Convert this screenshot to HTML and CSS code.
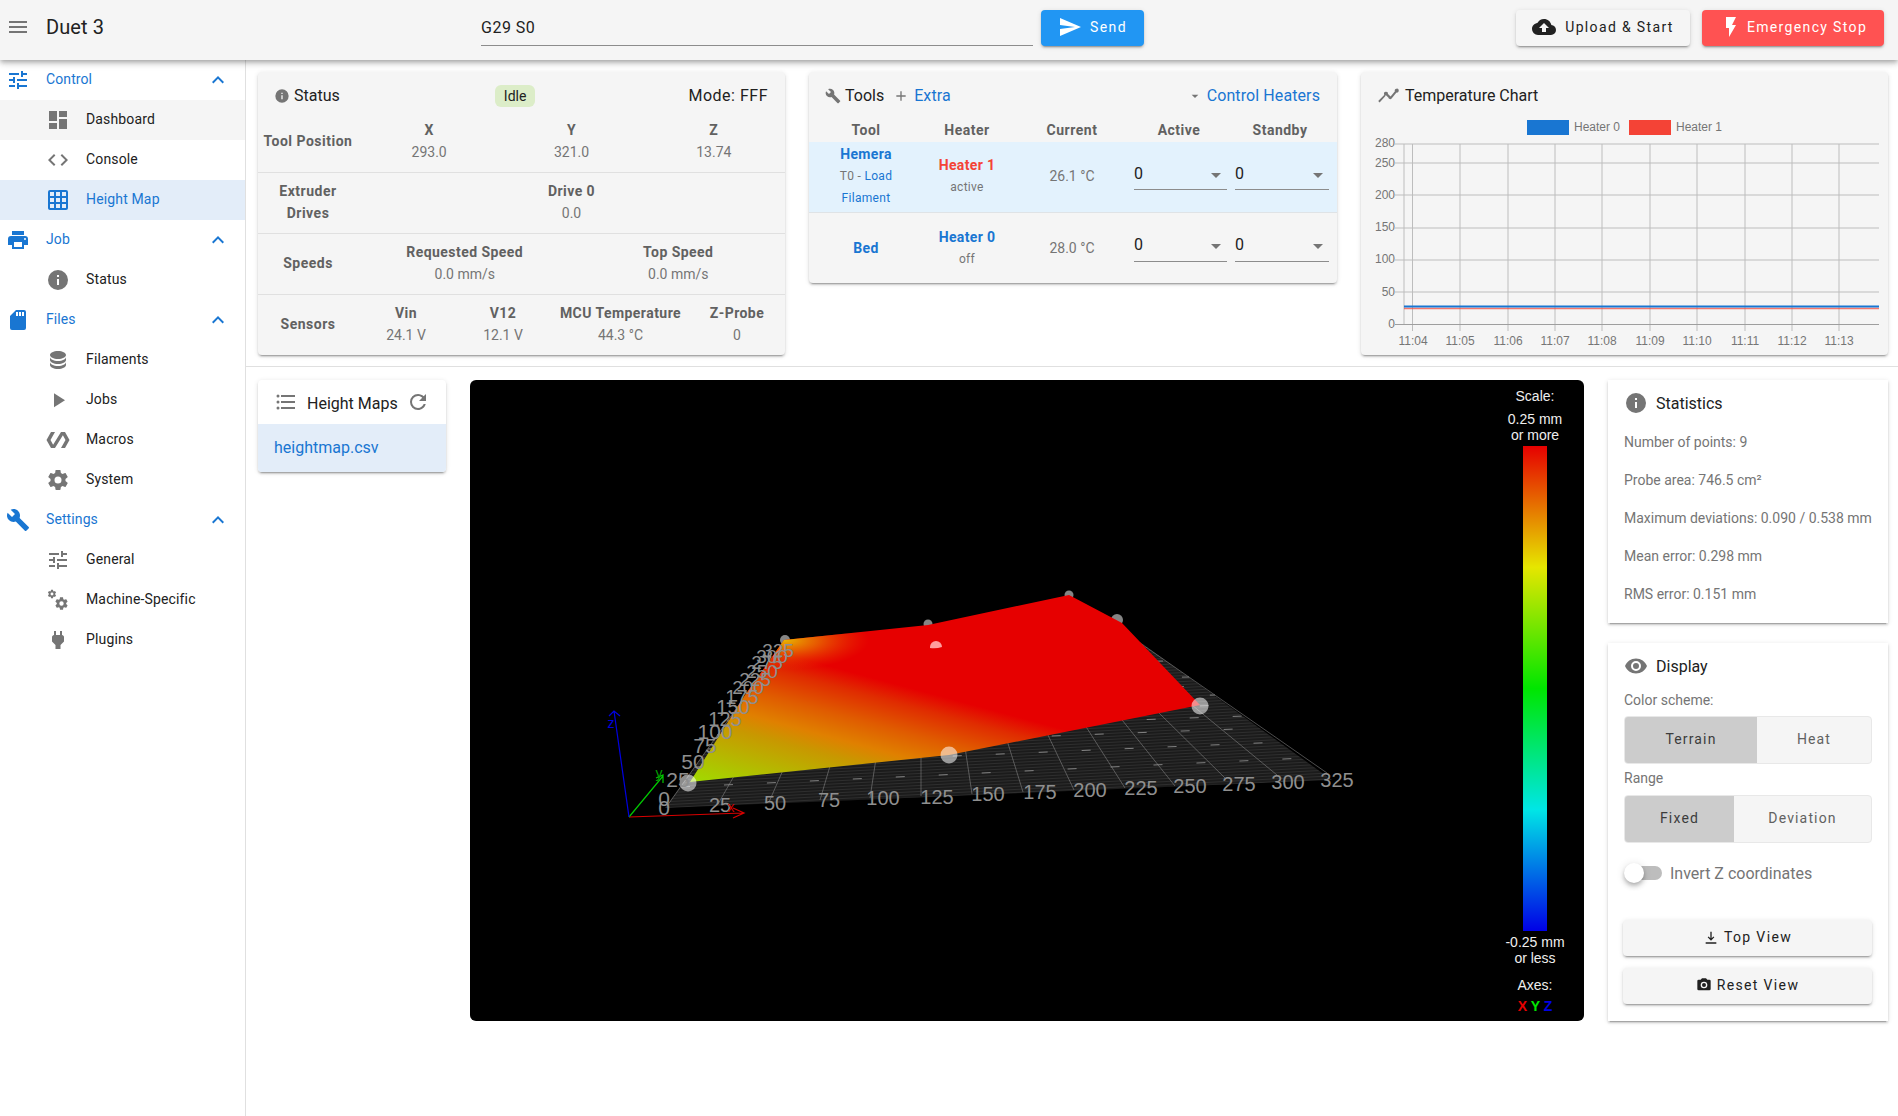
FILE: index.html
```html
<!DOCTYPE html>
<html lang="en">
<head>
<meta charset="utf-8">
<title>Duet 3</title>
<link rel="stylesheet" href="styles.css">
</head>
<body>
<svg class="defs" aria-hidden="true">
<defs>
<symbol id="i-menu" viewBox="0 0 24 24"><path d="M3,6H21V8H3V6M3,11H21V13H3V11M3,16H21V18H3V16Z"/></symbol>
<symbol id="i-tune" viewBox="0 0 24 24"><path d="M3 17v2h6v-2H3zM3 5v2h10V5H3zm10 16v-2h8v-2h-8v-2h-2v6h2zM7 9v2H3v2h4v2h2V9H7zm14 4v-2H11v2h10zm-6-4h2V7h4V5h-4V3h-2v6z"/></symbol>
<symbol id="i-up" viewBox="0 0 24 24"><path d="M7.41,15.41L12,10.83L16.59,15.41L18,14L12,8L6,14L7.41,15.41Z"/></symbol>
<symbol id="i-dash" viewBox="0 0 24 24"><path d="M13,3V9H21V3M13,21H21V11H13M3,21H11V15H3M3,13H11V3H3V13Z"/></symbol>
<symbol id="i-code" viewBox="0 0 24 24"><path d="M14.6,16.6L19.2,12L14.6,7.4L16,6L22,12L16,18L14.6,16.6M9.4,16.6L4.8,12L9.4,7.4L8,6L2,12L8,18L9.4,16.6Z"/></symbol>
<symbol id="i-grid" viewBox="0 0 24 24"><path d="M10,4V8H14V4H10M16,4V8H20V4H16M16,10V14H20V10H16M16,16V20H20V16H16M14,20V16H10V20H14M8,20V16H4V20H8M8,14V10H4V14H8M8,8V4H4V8H8M10,14H14V10H10V14M4,2H20A2,2 0 0,1 22,4V20A2,2 0 0,1 20,22H4C2.92,22 2,21.1 2,20V4A2,2 0 0,1 4,2Z"/></symbol>
<symbol id="i-print" viewBox="0 0 24 24"><path d="M18,3H6V7H18M19,12A1,1 0 0,1 18,11A1,1 0 0,1 19,10A1,1 0 0,1 20,11A1,1 0 0,1 19,12M16,19H8V14H16M19,8H5A3,3 0 0,0 2,11V17H6V21H18V17H22V11A3,3 0 0,0 19,8Z"/></symbol>
<symbol id="i-info" viewBox="0 0 24 24"><path d="M13,9H11V7H13M13,17H11V11H13M12,2A10,10 0 0,0 2,12A10,10 0 0,0 12,22A10,10 0 0,0 22,12A10,10 0 0,0 12,2Z"/></symbol>
<symbol id="i-sd" viewBox="0 0 24 24"><path d="M18,8H16V4H18M15,8H13V4H15M12,8H10V4H12M18,2H10L4,8V20A2,2 0 0,0 6,22H18A2,2 0 0,0 20,20V4A2,2 0 0,0 18,2Z"/></symbol>
<symbol id="i-db" viewBox="0 0 24 24"><path d="M12,3C7.58,3 4,4.79 4,7C4,9.21 7.58,11 12,11C16.42,11 20,9.21 20,7C20,4.79 16.42,3 12,3M4,9V12C4,14.21 7.58,16 12,16C16.42,16 20,14.21 20,12V9C20,11.21 16.42,13 12,13C7.58,13 4,11.21 4,9M4,14V17C4,19.21 7.58,21 12,21C16.42,21 20,19.21 20,17V14C20,16.21 16.42,18 12,18C7.58,18 4,16.21 4,14Z"/></symbol>
<symbol id="i-play" viewBox="0 0 24 24"><path d="M8,5.14V19.14L19,12.14L8,5.14Z"/></symbol>
<symbol id="i-poly" viewBox="0 0 24 24"><path d="M19 4h-4L7.11 16.63 4.5 12 9 4H5L.5 12 5 20h4l7.89-12.63L19.5 12 15 20h4l4.5-8z"/></symbol>
<symbol id="i-cog" viewBox="0 0 24 24"><path d="M12,15.5A3.5,3.5 0 0,1 8.5,12A3.5,3.5 0 0,1 12,8.5A3.5,3.5 0 0,1 15.5,12A3.5,3.5 0 0,1 12,15.5M19.43,12.97C19.47,12.65 19.5,12.33 19.5,12C19.5,11.67 19.47,11.34 19.43,11L21.54,9.37C21.73,9.22 21.78,8.95 21.66,8.73L19.66,5.27C19.54,5.05 19.27,4.96 19.05,5.05L16.56,6.05C16.04,5.66 15.5,5.32 14.87,5.07L14.5,2.42C14.46,2.18 14.25,2 14,2H10C9.75,2 9.54,2.18 9.5,2.42L9.13,5.07C8.5,5.32 7.96,5.66 7.44,6.05L4.95,5.05C4.73,4.96 4.46,5.05 4.34,5.27L2.34,8.73C2.21,8.95 2.27,9.22 2.46,9.37L4.57,11C4.53,11.34 4.5,11.67 4.5,12C4.5,12.33 4.53,12.65 4.57,12.97L2.46,14.63C2.27,14.78 2.21,15.05 2.34,15.27L4.34,18.73C4.46,18.95 4.73,19.03 4.95,18.95L7.44,17.94C7.96,18.34 8.5,18.68 9.13,18.93L9.5,21.58C9.54,21.82 9.75,22 10,22H14C14.25,22 14.46,21.82 14.5,21.58L14.87,18.93C15.5,18.67 16.04,18.34 16.56,17.94L19.05,18.95C19.27,19.03 19.54,18.95 19.66,18.73L21.66,15.27C21.78,15.05 21.73,14.78 21.54,14.63L19.43,12.97Z"/></symbol>
<symbol id="i-cogs" viewBox="0 0 24 24"><use href="#i-cog" x="8" y="8" width="15" height="15"/><use href="#i-cog" x="1" y="1" width="10" height="10"/></symbol>
<symbol id="i-wrench" viewBox="0 0 24 24"><path d="M22.7,19L13.6,9.9C14.5,7.6 14,4.9 12.1,3C10.1,1 7.1,0.6 4.7,1.7L9,6L6,9L1.6,4.7C0.4,7.1 0.9,10.1 2.9,12.1C4.8,14 7.5,14.5 9.8,13.6L18.9,22.7C19.3,23.1 19.9,23.1 20.3,22.7L22.6,20.4C23.1,20 23.1,19.3 22.7,19Z"/></symbol>
<symbol id="i-plug" viewBox="0 0 24 24"><path d="M16,7V3H14V7H10V3H8V7C7,7 6,8 6,9V13.5L9.5,17V21H14.5V17L18,13.5V9C18,8 17,7 16,7Z"/></symbol>
<symbol id="i-send" viewBox="0 0 24 24"><path d="M2,21L23,12L2,3V10L17,12L2,14V21Z"/></symbol>
<symbol id="i-upload" viewBox="0 0 24 24"><path d="M14,13V17H10V13H7L12,8L17,13M19.35,10.03C18.67,6.59 15.64,4 12,4C9.11,4 6.6,5.64 5.35,8.03C2.34,8.36 0,10.9 0,14A6,6 0 0,0 6,20H19A5,5 0 0,0 24,15C24,12.36 21.95,10.22 19.35,10.03Z"/></symbol>
<symbol id="i-flash" viewBox="0 0 24 24"><path d="M7,2V13H10V22L17,10H13L17,2H7Z"/></symbol>
<symbol id="i-plus" viewBox="0 0 24 24"><path d="M19,13H13V19H11V13H5V11H11V5H13V11H19V13Z"/></symbol>
<symbol id="i-down" viewBox="0 0 24 24"><path d="M7,10L12,15L17,10H7Z"/></symbol>
<symbol id="i-trend" viewBox="0 0 24 24"><path d="M2.6,19.4L1.2,18L7.2,12L7.1,11.3A2,2 0 1 1 11,11L13.6,13.6L17.9,8.3A2,2 0 1 1 19.5,9.6L14.6,15.6A2,2 0 0 1 11.3,14.6L8.7,12A2,2 0 0 1 8,13.5Z"/></symbol>
<symbol id="i-list" viewBox="0 0 24 24"><path d="M7,5H21V7H7V5M7,13V11H21V13H7M4,4.5A1.5,1.5 0 0,1 5.5,6A1.5,1.5 0 0,1 4,7.5A1.5,1.5 0 0,1 2.5,6A1.5,1.5 0 0,1 4,4.5M4,10.5A1.5,1.5 0 0,1 5.5,12A1.5,1.5 0 0,1 4,13.5A1.5,1.5 0 0,1 2.5,12A1.5,1.5 0 0,1 4,10.5M7,19V17H21V19H7M4,16.5A1.5,1.5 0 0,1 5.5,18A1.5,1.5 0 0,1 4,19.5A1.5,1.5 0 0,1 2.5,18A1.5,1.5 0 0,1 4,16.5Z"/></symbol>
<symbol id="i-refresh" viewBox="0 0 24 24"><path d="M17.65,6.35C16.2,4.9 14.21,4 12,4A8,8 0 0,0 4,12A8,8 0 0,0 12,20C15.73,20 18.84,17.45 19.73,14H17.65C16.83,16.33 14.61,18 12,18A6,6 0 0,1 6,12A6,6 0 0,1 12,6C13.66,6 15.14,6.69 16.22,7.78L13,11H20V4L17.65,6.35Z"/></symbol>
<symbol id="i-eye" viewBox="0 0 24 24"><path d="M12,9A3,3 0 0,0 9,12A3,3 0 0,0 12,15A3,3 0 0,0 15,12A3,3 0 0,0 12,9M12,17A5,5 0 0,1 7,12A5,5 0 0,1 12,7A5,5 0 0,1 17,12A5,5 0 0,1 12,17M12,4.5C7,4.5 2.73,7.61 1,12C2.73,16.39 7,19.5 12,19.5C17,19.5 21.27,16.39 23,12C21.27,7.61 17,4.5 12,4.5Z"/></symbol>
<symbol id="i-collapse" viewBox="0 0 24 24"><path d="M17,12.5L12,17.5L7,12.5L8.4,11.1L11,13.7V4H13V13.7L15.6,11.1L17,12.5M4,20H20V22H4V20Z"/></symbol>
<symbol id="i-camera" viewBox="0 0 24 24"><path d="M4,4H7L9,2H15L17,4H20A2,2 0 0,1 22,6V18A2,2 0 0,1 20,20H4A2,2 0 0,1 2,18V6A2,2 0 0,1 4,4M12,7A5,5 0 0,0 7,12A5,5 0 0,0 12,17A5,5 0 0,0 17,12A5,5 0 0,0 12,7M12,9A3,3 0 0,1 15,12A3,3 0 0,1 12,15A3,3 0 0,1 9,12A3,3 0 0,1 12,9Z"/></symbol>
</defs>
</svg>

<div class="app">
  <header class="toolbar">
    <svg class="ico ico-24 grey tb-menu"><use href="#i-menu"/></svg>
    <div class="tb-title">Duet 3</div>
    <div class="tb-input">G29 S0</div>
    <button class="btn btn-send"><svg class="ico ico-24"><use href="#i-send"/></svg>Send</button>
    <div class="tb-spacer"></div>
    <button class="btn btn-upload"><svg class="ico ico-24"><use href="#i-upload"/></svg>Upload &amp; Start</button>
    <button class="btn btn-stop"><svg class="ico ico-24"><use href="#i-flash"/></svg>Emergency Stop</button>
  </header>

  <nav class="sidebar">
    <div class="nav-head"><svg class="ico ico-24 nav-head-ico"><use href="#i-tune"/></svg><span class="nav-text">Control</span><svg class="ico ico-24 nav-chev"><use href="#i-up"/></svg></div>
    <div class="nav-item nav-hover"><svg class="ico ico-24 grey"><use href="#i-dash"/></svg><span class="nav-sub">Dashboard</span></div>
    <div class="nav-item"><svg class="ico ico-24 grey"><use href="#i-code"/></svg><span class="nav-sub">Console</span></div>
    <div class="nav-item nav-active"><svg class="ico ico-24"><use href="#i-grid"/></svg><span class="nav-sub">Height Map</span></div>
    <div class="nav-head"><svg class="ico ico-24 nav-head-ico"><use href="#i-print"/></svg><span class="nav-text">Job</span><svg class="ico ico-24 nav-chev"><use href="#i-up"/></svg></div>
    <div class="nav-item"><svg class="ico ico-24 grey"><use href="#i-info"/></svg><span class="nav-sub">Status</span></div>
    <div class="nav-head"><svg class="ico ico-24 nav-head-ico"><use href="#i-sd"/></svg><span class="nav-text">Files</span><svg class="ico ico-24 nav-chev"><use href="#i-up"/></svg></div>
    <div class="nav-item"><svg class="ico ico-24 grey"><use href="#i-db"/></svg><span class="nav-sub">Filaments</span></div>
    <div class="nav-item"><svg class="ico ico-24 grey"><use href="#i-play"/></svg><span class="nav-sub">Jobs</span></div>
    <div class="nav-item"><svg class="ico ico-24 grey"><use href="#i-poly"/></svg><span class="nav-sub">Macros</span></div>
    <div class="nav-item"><svg class="ico ico-24 grey"><use href="#i-cog"/></svg><span class="nav-sub">System</span></div>
    <div class="nav-head"><svg class="ico ico-24 nav-head-ico"><use href="#i-wrench"/></svg><span class="nav-text">Settings</span><svg class="ico ico-24 nav-chev"><use href="#i-up"/></svg></div>
    <div class="nav-item"><svg class="ico ico-24 grey"><use href="#i-tune"/></svg><span class="nav-sub">General</span></div>
    <div class="nav-item"><svg class="ico ico-24 grey"><use href="#i-cogs"/></svg><span class="nav-sub">Machine-Specific</span></div>
    <div class="nav-item"><svg class="ico ico-24 grey"><use href="#i-plug"/></svg><span class="nav-sub">Plugins</span></div>
  </nav>

  <main class="content">
    <section class="top-row">
      <div class="card card-grey card-status">
        <div class="status-head">
          <div class="title"><svg class="ico ico-16 grey"><use href="#i-info"/></svg>Status</div>
          <div class="chip">Idle</div>
          <div class="title title-mode">Mode: FFF</div>
        </div>
        <div class="st-row">
          <div class="st-label">Tool Position</div>
          <div class="st-cols st-3">
            <div class="st-col"><b>X</b><span>293.0</span></div>
            <div class="st-col"><b>Y</b><span>321.0</span></div>
            <div class="st-col"><b>Z</b><span>13.74</span></div>
          </div>
        </div>
        <div class="st-row st-line">
          <div class="st-label">Extruder<br>Drives</div>
          <div class="st-cols st-1"><div class="st-col"><b>Drive 0</b><span>0.0</span></div></div>
        </div>
        <div class="st-row st-line">
          <div class="st-label">Speeds</div>
          <div class="st-cols st-2">
            <div class="st-col"><b>Requested Speed</b><span>0.0 mm/s</span></div>
            <div class="st-col"><b>Top Speed</b><span>0.0 mm/s</span></div>
          </div>
        </div>
        <div class="st-row st-line">
          <div class="st-label">Sensors</div>
          <div class="st-cols st-4">
            <div class="st-col"><b>Vin</b><span>24.1 V</span></div>
            <div class="st-col"><b>V12</b><span>12.1 V</span></div>
            <div class="st-col"><b>MCU Temperature</b><span>44.3 °C</span></div>
            <div class="st-col"><b>Z-Probe</b><span>0</span></div>
          </div>
        </div>
      </div>

      <div class="card card-grey card-tools">
        <div class="tools-head">
          <div class="title"><svg class="ico ico-16 grey"><use href="#i-wrench"/></svg>Tools</div>
          <svg class="ico ico-16 grey tools-plus"><use href="#i-plus"/></svg><span class="link-title">Extra</span>
          <div class="tb-spacer"></div>
          <svg class="ico ico-16 grey tools-down"><use href="#i-down"/></svg><span class="link-title tools-ctl">Control Heaters</span>
        </div>
        <div class="tt tt-head">
          <div>Tool</div><div>Heater</div><div>Current</div><div class="tt-h4">Active</div><div class="tt-h5">Standby</div>
        </div>
        <div class="tt tt-row tt-sel">
          <div class="tt-stack"><b class="blue">Hemera</b><span class="small">T0 - <span class="blue">Load</span></span><span class="small blue">Filament</span></div>
          <div class="tt-stack"><b class="red">Heater 1</b><span class="small">active</span></div>
          <div class="tt-val">26.1 °C</div>
          <div class="sel sel-a"><span>0</span><svg class="ico ico-24 grey"><use href="#i-down"/></svg></div>
          <div class="sel sel-s"><span>0</span><svg class="ico ico-24 grey"><use href="#i-down"/></svg></div>
        </div>
        <div class="tt tt-row">
          <div class="tt-stack"><b class="blue">Bed</b></div>
          <div class="tt-stack"><b class="blue">Heater 0</b><span class="small">off</span></div>
          <div class="tt-val">28.0 °C</div>
          <div class="sel sel-a"><span>0</span><svg class="ico ico-24 grey"><use href="#i-down"/></svg></div>
          <div class="sel sel-s"><span>0</span><svg class="ico ico-24 grey"><use href="#i-down"/></svg></div>
        </div>
      </div>

      <div class="card card-grey card-chart">
        <div class="chart-head"><svg class="ico ico-24 grey"><use href="#i-trend"/></svg><span class="title">Temperature Chart</span></div>
        <svg class="chart" viewBox="1361 116 527 239">
          <g class="c-grid">
            <path d="M1395 144H1879M1395 163H1879M1395 195H1879M1395 228H1879M1395 260H1879M1395 292H1879"/>
            <path d="M1404 144V324M1412.5 144V331M1460 144V331M1508 144V331M1555 144V331M1602 144V331M1650 144V331M1697 144V331M1745 144V331M1792 144V331M1839 144V331"/>
            <path class="c-axis" d="M1395 324.5H1879"/>
          </g>
          <path class="c-red" d="M1404 308.5H1879"/>
          <path class="c-blue" d="M1404 306.5H1879"/>
          <rect class="c-blue-f" x="1527" y="120" width="42" height="15"/>
          <rect class="c-red-f" x="1629" y="120" width="42" height="15"/>
          <text class="c-t" x="1574" y="131">Heater 0</text>
          <text class="c-t" x="1676" y="131">Heater 1</text>
          <g class="c-yl">
            <text x="1395" y="147">280</text><text x="1395" y="167">250</text><text x="1395" y="199">200</text><text x="1395" y="231">150</text><text x="1395" y="263">100</text><text x="1395" y="296">50</text><text x="1395" y="328">0</text>
          </g>
          <g class="c-xl">
            <text x="1413" y="345">11:04</text><text x="1460" y="345">11:05</text><text x="1508" y="345">11:06</text><text x="1555" y="345">11:07</text><text x="1602" y="345">11:08</text><text x="1650" y="345">11:09</text><text x="1697" y="345">11:10</text><text x="1745" y="345">11:11</text><text x="1792" y="345">11:12</text><text x="1839" y="345">11:13</text>
          </g>
        </svg>
      </div>
    </section>

    <section class="bottom-row">
      <div class="card card-list">
        <div class="list-head">
          <svg class="ico ico-24 grey"><use href="#i-list"/></svg>
          <span class="title">Height Maps</span>
          <svg class="ico ico-24 grey"><use href="#i-refresh"/></svg>
        </div>
        <div class="list-item">heightmap.csv</div>
      </div>

      <div class="scene">
        <svg class="scene-svg" viewBox="470 380 1114 641">
          <defs>
            <linearGradient id="surf" gradientUnits="userSpaceOnUse" x1="728.5" y1="639" x2="690" y2="782">
              <stop offset="0" stop-color="#e60000"/>
              <stop offset=".12" stop-color="#e02c00"/>
              <stop offset=".3" stop-color="#e05c00"/>
              <stop offset=".46" stop-color="#e08000"/>
              <stop offset=".58" stop-color="#c89800"/>
              <stop offset="1" stop-color="#a0dc00"/>
            </linearGradient>
            <radialGradient id="corner" gradientUnits="userSpaceOnUse" cx="784" cy="640" r="85" gradientTransform="translate(784 640) scale(1 .35) translate(-784 -640)">
              <stop offset="0" stop-color="#e8b800"/>
              <stop offset=".4" stop-color="#e87800" stop-opacity=".75"/>
              <stop offset="1" stop-color="#e64000" stop-opacity="0"/>
            </radialGradient>
            <pattern id="mesh" width="3" height="3" patternUnits="userSpaceOnUse" patternTransform="rotate(-3)">
              <rect width="3" height="3" fill="#1b1b1b"/>
              <path d="M0 1.5H3" stroke="#2e2e2e" stroke-width="1"/>
            </pattern>
          </defs>
          <polygon class="floor" points="665,808 1332,780 1140,642 785,640"/>
          <g class="floor-lines">
            <path d="M667 806L785 640M718 804L812 640M769 802L840 640M820 800L867 640M870 798L894 640M921 796L921 640M972 794L949 640M1023 792L976 640M1074 790L1003 640M1125 788L1031 640M1175 786L1058 640M1226 779L1085 640M1277 775L1113 640M1327 773L1140 643"/>
          </g>
          <g class="floor-dash">
            <path d="M681 787L1305 758M695 767L1282 742M708 749L1262 728M717 735L1245 716M727 721L1229 705M737 708L1215 695M745 697L1202 686M752 686L1189 677M759 676L1177 669M767 666L1166 661M773 657L1156 654M779 648L1146 647"/>
          </g>
          <circle class="ball-back" cx="785" cy="640" r="5"/>
          <circle class="ball-back" cx="928" cy="624" r="4.5"/>
          <circle class="ball-back" cx="1069" cy="595" r="4.5"/>
          <circle class="ball-back" cx="1117" cy="620" r="6"/>
          <polygon class="surface" points="690,782 949,755 1200,705 1122,623 1069,595 928,625 784,640 745,695"/>
          <polygon class="surface-corner" points="690,782 949,755 1200,705 1122,623 1069,595 928,625 784,640 745,695"/>
          <circle class="ball" cx="688" cy="783" r="8.5"/>
          <circle class="ball" cx="949" cy="755" r="8.5"/>
          <circle class="ball" cx="1200" cy="706" r="8.5"/>
          <path class="ball-cap" d="M930 647A6 6 0 0 1 942 647Q936 649 930 648Z"/>
          <g class="ax-y">
            <text class="l3" x="778" y="657">325</text><text class="l3" x="772" y="663">300</text><text class="l3" x="767" y="669">275</text><text class="l3" x="762" y="678">250</text><text class="l3" x="755" y="686">225</text><text class="l3" x="748" y="694">200</text><text class="l2" x="742" y="704">175</text><text class="l2" x="733" y="714">150</text><text class="l2" x="725" y="726">125</text><text class="l1" x="715" y="739">100</text><text class="l1" x="705" y="753">75</text><text class="l1" x="693" y="769">50</text><text class="l1" x="678" y="787">25</text><text class="l1" x="664" y="806">0</text><text class="l1" x="664" y="815">0</text>
          </g>
          <g class="ax-x">
            <text x="720" y="812">25</text><text x="775" y="810">50</text><text x="829" y="807">75</text><text x="883" y="805">100</text><text x="937" y="804">125</text><text x="988" y="801">150</text><text x="1040" y="799">175</text><text x="1090" y="797">200</text><text x="1141" y="795">225</text><text x="1190" y="793">250</text><text x="1239" y="791">275</text><text x="1288" y="789">300</text><text x="1337" y="787">325</text>
          </g>
          <path class="axis-r" d="M629 817L743 813M733 808L744 813L733 818"/>
          <path class="axis-g" d="M629 817L663 776M656 778L663 775L663 783"/>
          <path class="axis-b" d="M629 817L614 711M609 716L614 711L620 716"/>
          <text class="ax-l l-r" x="731" y="812">x</text>
          <text class="ax-l l-g" x="659" y="778">y</text>
          <text class="ax-l l-b" x="611" y="728">z</text>
        </svg>
        <div class="legend">
          <div class="lg-t lg-scale">Scale:</div>
          <div class="lg-t lg-tight">0.25 mm<br>or more</div>
          <div class="lg-bar"></div>
          <div class="lg-t lg-tight">-0.25 mm<br>or less</div>
          <div class="lg-t lg-axes">Axes:</div>
          <div class="lg-xyz"><span class="x-r">X</span> <span class="x-g">Y</span> <span class="x-b">Z</span></div>
        </div>
      </div>

      <div class="side">
        <div class="card card-stats">
          <div class="side-head"><svg class="ico ico-24 grey"><use href="#i-info"/></svg><span class="title">Statistics</span></div>
          <p class="stat">Number of points: 9</p>
          <p class="stat">Probe area: 746.5 cm²</p>
          <p class="stat">Maximum deviations: 0.090 / 0.538 mm</p>
          <p class="stat">Mean error: 0.298 mm</p>
          <p class="stat">RMS error: 0.151 mm</p>
        </div>
        <div class="card card-display">
          <div class="side-head"><svg class="ico ico-24 grey"><use href="#i-eye"/></svg><span class="title">Display</span></div>
          <div class="d-label d-first">Color scheme:</div>
          <div class="tog tog-a"><div class="tog-b on">Terrain</div><div class="tog-b">Heat</div></div>
          <div class="d-label">Range</div>
          <div class="tog tog-b2"><div class="tog-b on">Fixed</div><div class="tog-b">Deviation</div></div>
          <div class="switch-row"><div class="sw"><div class="sw-track"></div><div class="sw-thumb"></div></div><span class="sw-label">Invert Z coordinates</span></div>
          <button class="btn view-btn view-first"><svg class="ico ico-16"><use href="#i-collapse"/></svg>Top View</button>
          <button class="btn view-btn"><svg class="ico ico-16"><use href="#i-camera"/></svg>Reset View</button>
        </div>
      </div>
    </section>
  </main>
</div>
</body>
</html>
```

FILE: styles.css
```css
* { box-sizing: border-box; }
html, body { margin: 0; padding: 0; }
body { font-family: Roboto, "Liberation Sans", sans-serif; font-size: 14px; color: #212121; background: #fff; width: 1898px; height: 1116px; overflow: hidden; }
.defs { width: 0; height: 0; display: block; }
.ico { fill: currentColor; flex: none; display: block; }
.ico-24 { width: 24px; height: 24px; }
.ico-20 { width: 20px; height: 20px; }
.ico-16 { width: 16px; height: 16px; }
.grey { color: #757575; }
.blue { color: #1976d2; }
.red { color: #f44336; }

.app { display: grid; grid-template-columns: 246px 1fr; grid-template-rows: 60px 1fr; height: 1116px; }

.toolbar { grid-column: 1 / 3; display: flex; align-items: center; background: #f5f5f5; box-shadow: 0 2px 4px -1px rgba(0,0,0,.2), 0 4px 5px 0 rgba(0,0,0,.14), 0 1px 10px 0 rgba(0,0,0,.12); position: relative; z-index: 2; padding: 0 14px 4px 6px; }
.tb-menu { margin-right: 16px; margin-bottom: 2px; }
.tb-title { font-size: 20px; width: 435px; letter-spacing: .1px; margin-bottom: 2px; }
.tb-input { width: 552px; height: 35px; border-bottom: 1px solid #8c8c8c; font-size: 16px; letter-spacing: .5px; padding-top: 7px; margin-top: 1px; }
.tb-spacer { flex: 1; }
.btn { display: flex; align-items: center; justify-content: center; border: 0; border-radius: 4px; font-family: Roboto, "Liberation Sans", sans-serif; font-size: 14px; letter-spacing: 1.35px; height: 36px; padding: 0 0 2px; box-shadow: 0 3px 1px -2px rgba(0,0,0,.2), 0 2px 2px 0 rgba(0,0,0,.14), 0 1px 5px 0 rgba(0,0,0,.12); background: #f5f5f5; color: #212121; }
.btn-send { margin-left: 8px; width: 103px; background: #2196f3; color: #fff; gap: 8px; }
.btn-upload { width: 174px; gap: 9px; }
.btn-stop { width: 182px; margin-left: 12px; background: #ff5252; color: #fff; gap: 4px; }

.sidebar { border-right: 1px solid #e0e0e0; display: flex; flex-direction: column; padding-top: 0; }
.nav-head, .nav-item { height: 40px; display: flex; align-items: center; }
.nav-head { padding-left: 6px; color: #1976d2; }
.nav-head-ico { margin-right: 16px; }
.nav-text { flex: 1; padding-bottom: 2px; letter-spacing: .1px; }
.nav-chev { margin-right: 15px; }
.nav-item { padding-left: 46px; }
.nav-sub { margin-left: 16px; padding-bottom: 2px; letter-spacing: .15px; }
.nav-hover { background: #f5f5f5; }
.nav-active { background: #e3edf9; color: #1976d2; }

.content { display: flex; flex-direction: column; min-width: 0; }
.top-row { display: grid; grid-template-columns: 527px 528px 527px; column-gap: 24px; align-items: start; padding: 12px 10px 12px 12px; height: 307px; border-bottom: 1px solid #e0e0e0; }
.card { border-radius: 4px; box-shadow: 0 3px 1px -2px rgba(0,0,0,.2), 0 2px 2px 0 rgba(0,0,0,.14), 0 1px 5px 0 rgba(0,0,0,.12); background: #fff; }
.card-grey { background: #f5f5f5; }
.title { font-size: 16px; display: flex; align-items: center; gap: 4px; color: #212121; }
.title-mode { letter-spacing: .5px; }

.card-status { height: 283px; display: flex; flex-direction: column; }
.status-head { height: 39px; padding: 8px 17px 0 16px; display: flex; justify-content: space-between; align-items: center; margin-bottom: 0; }
.chip { background: #dcedc8; border-radius: 6px; height: 22px; width: 40px; display: flex; align-items: center; justify-content: center; margin-right: -2px; }
.st-row { display: flex; height: 61px; color: #616161; }
.st-line { border-top: 1px solid #e0e0e0; }
.st-label { width: 100px; font-weight: 700; letter-spacing: .5px; align-self: center; text-align: center; line-height: 22px; color: #616161; padding-bottom: 2px; }
.st-cols { flex: 1; display: grid; align-items: center; padding-bottom: 2px; }
.st-3 { grid-template-columns: repeat(3, 1fr); }
.st-1 { grid-template-columns: 1fr; }
.st-2 { grid-template-columns: repeat(2, 1fr); }
.st-4 { grid-template-columns: 96px 98px 137px 96px; }
.st-col { display: flex; flex-direction: column; align-items: center; line-height: 22px; color: #757575; font-size: 14px; }
.st-col b { font-weight: 700; color: #616161; letter-spacing: .45px; }

.card-tools { height: 211px; }
.tools-head { height: 46px; display: flex; align-items: center; padding: 1px 17px 0 16px; }
.tools-plus { margin-left: 9px; margin-right: 5px; }
.tools-down { margin-right: 3px; }
.link-title { font-size: 16px; color: #1976d2; letter-spacing: .1px; }
.tools-ctl { margin-left: 1px; }
.tt { display: grid; grid-template-columns: 114px 88px 122px 96px 108px; }
.tt-head { height: 24px; line-height: 24px; font-weight: 700; letter-spacing: .5px; color: #616161; text-align: center; }
.tt-h4 { padding-right: 4px; }
.tt-h5 { padding-right: 6px; }
.tt-row { height: 71px; align-items: center; text-align: center; color: #757575; }
.tt-sel { background: #e3f2fd; height: 71px; border-bottom: 1px solid #dfe3e6; }
.tt-stack { display: flex; flex-direction: column; align-items: center; line-height: 22px; padding-bottom: 2px; }
.tt-stack b { font-weight: 700; font-size: 14px; letter-spacing: .35px; }
.small { font-size: 12px; color: #757575; letter-spacing: .3px; }
.small .blue, .small.blue { color: #1976d2; }
.tt-val { font-size: 14px; padding-bottom: 2px; }
.sel { height: 30px; border-bottom: 1px solid #8c8c8c; display: flex; align-items: center; justify-content: space-between; margin-bottom: 4px; font-size: 16px; color: #212121; }
.sel span { margin-top: -3px; }
.sel svg { margin-right: -1px; }
.sel-a { margin-left: 1px; margin-right: 2px; }
.sel-s { margin-left: 6px; margin-right: 8px; }

.card-chart { height: 283px; }
.chart-head { height: 44px; display: flex; align-items: center; gap: 4px; padding: 2px 0 0 16px; }
.chart { display: block; width: 527px; height: 239px; }
.c-grid path { fill: none; stroke: #bdbdbd; stroke-width: 1; }
.c-grid .c-axis { stroke: #9e9e9e; }
.c-red { stroke: #f44336; stroke-width: 1.5; opacity: .7; }
.c-blue { stroke: #1976d2; stroke-width: 2; }
.c-blue-f { fill: #1976d2; }
.c-red-f { fill: #f44336; }
.c-t, .c-yl text, .c-xl text { font-family: "Liberation Sans", Arial, sans-serif; font-size: 12px; fill: #757575; }
.c-yl text { text-anchor: end; }
.c-xl text { text-anchor: middle; }

.bottom-row { display: flex; gap: 24px; padding: 13px 10px 0 12px; align-items: flex-start; }
.card-list { width: 188px; overflow: hidden; }
.list-head { height: 44px; display: flex; align-items: center; padding: 0 16px; color: #212121; }
.list-head .title { margin-left: 9px; flex: 1; padding-top: 2px; }
.list-item { height: 48px; background: #e3edf9; color: #1976d2; font-size: 16px; padding-left: 16px; line-height: 48px; }

.scene { position: relative; width: 1114px; height: 641px; background: #000; border-radius: 6px; overflow: hidden; }
.scene-svg { display: block; width: 1114px; height: 641px; }
.floor { fill: url(#mesh); }
.floor-lines path { fill: none; stroke: #8a8a8a; stroke-width: .8; opacity: .7; }
.floor-dash path { fill: none; stroke: #9a9a9a; stroke-width: .8; stroke-dasharray: 9 34; }
.surface { fill: url(#surf); }
.surface-corner { fill: url(#corner); }
.ball-back { fill: #858585; }
.ball { fill: #fff; opacity: .55; }
.ball-cap { fill: #ff9d9d; }
.ax-y text, .ax-x text { font-family: "Liberation Sans", Arial, sans-serif; text-anchor: middle; fill: #8f8f8f; }
.ax-x text { font-size: 20px; }
.ax-y .l1 { font-size: 21px; }
.ax-y .l2 { font-size: 20px; }
.ax-y .l3 { font-size: 19px; }
.axis-r, .axis-g, .axis-b { fill: none; stroke-width: 1.2; }
.axis-r { stroke: #d80000; }
.axis-g { stroke: #00c800; }
.axis-b { stroke: #0000e0; }
.ax-l { font-family: "Liberation Sans", Arial, sans-serif; font-size: 14px; text-anchor: middle; }
.l-r { fill: #c80000; }
.l-g { fill: #00a000; }
.l-b { fill: #0000e0; }

.legend { position: absolute; top: 0; right: 0; width: 98px; height: 641px; display: flex; flex-direction: column; align-items: center; color: #eee; font-family: "Liberation Sans", Arial, sans-serif; font-size: 14px; }
.lg-t { text-align: center; }
.lg-scale { margin-top: 8px; line-height: 16px; }
.lg-tight { line-height: 16px; margin-top: 7px; }
.lg-bar { width: 24px; height: 485px; margin-top: 3px; background: linear-gradient(to bottom, #e60000 0%, #e6e600 25%, #00e600 50%, #00e6e6 75%, #0000e6 100%); }
.lg-bar + .lg-tight { margin-top: 3px; }
.lg-axes { margin-top: 11px; line-height: 16px; }
.lg-xyz { font-weight: 700; line-height: 16px; margin-top: 5px; }
.x-r { color: #e60000; }
.x-g { color: #00e600; }
.x-b { color: #0000e6; }

.side { width: 280px; display: flex; flex-direction: column; gap: 20px; }
.card-stats { height: 243px; border-radius: 0; padding: 0 16px; }
.side-head { display: flex; align-items: center; height: 46px; gap: 8px; }
.stat { margin: 0; height: 38px; line-height: 38px; color: #757575; font-size: 14px; }
.side-head + .stat { margin-top: -3px; }
.card-display { height: 378px; border-radius: 0; padding: 0 16px; display: flex; flex-direction: column; }
.d-label { color: #757575; line-height: 20px; height: 20px; margin-top: 4px; }
.d-first { margin-top: 1px; margin-bottom: 6px; }
.tog { display: grid; height: 48px; border: 1px solid #e8e8e8; border-radius: 4px; overflow: hidden; background: #f5f5f5; letter-spacing: 1.15px; color: #616161; }
.tog-a { grid-template-columns: 132px 1fr; }
.tog-b2 { grid-template-columns: 109px 1fr; margin-top: 7px; }
.tog-b { display: flex; align-items: center; justify-content: center; padding-bottom: 2px; }
.tog-b.on { background: #ccc; color: #3c3c3c; }
.switch-row { display: flex; align-items: center; margin-top: 18px; height: 24px; }
.sw { position: relative; width: 46px; height: 24px; }
.sw-track { position: absolute; left: 8px; top: 5px; width: 30px; height: 14px; border-radius: 7px; background: #bdbdbd; }
.sw-thumb { position: absolute; left: 0; top: 2px; width: 20px; height: 20px; border-radius: 50%; background: #fff; box-shadow: 0 2px 4px -1px rgba(0,0,0,.2), 0 4px 5px 0 rgba(0,0,0,.14), 0 1px 10px 0 rgba(0,0,0,.12); }
.sw-label { color: #757575; font-size: 16px; }
.view-btn { width: 249px; gap: 5px; margin-left: -1px; margin-top: 12px; }
.view-first { margin-top: 35px; }
```
